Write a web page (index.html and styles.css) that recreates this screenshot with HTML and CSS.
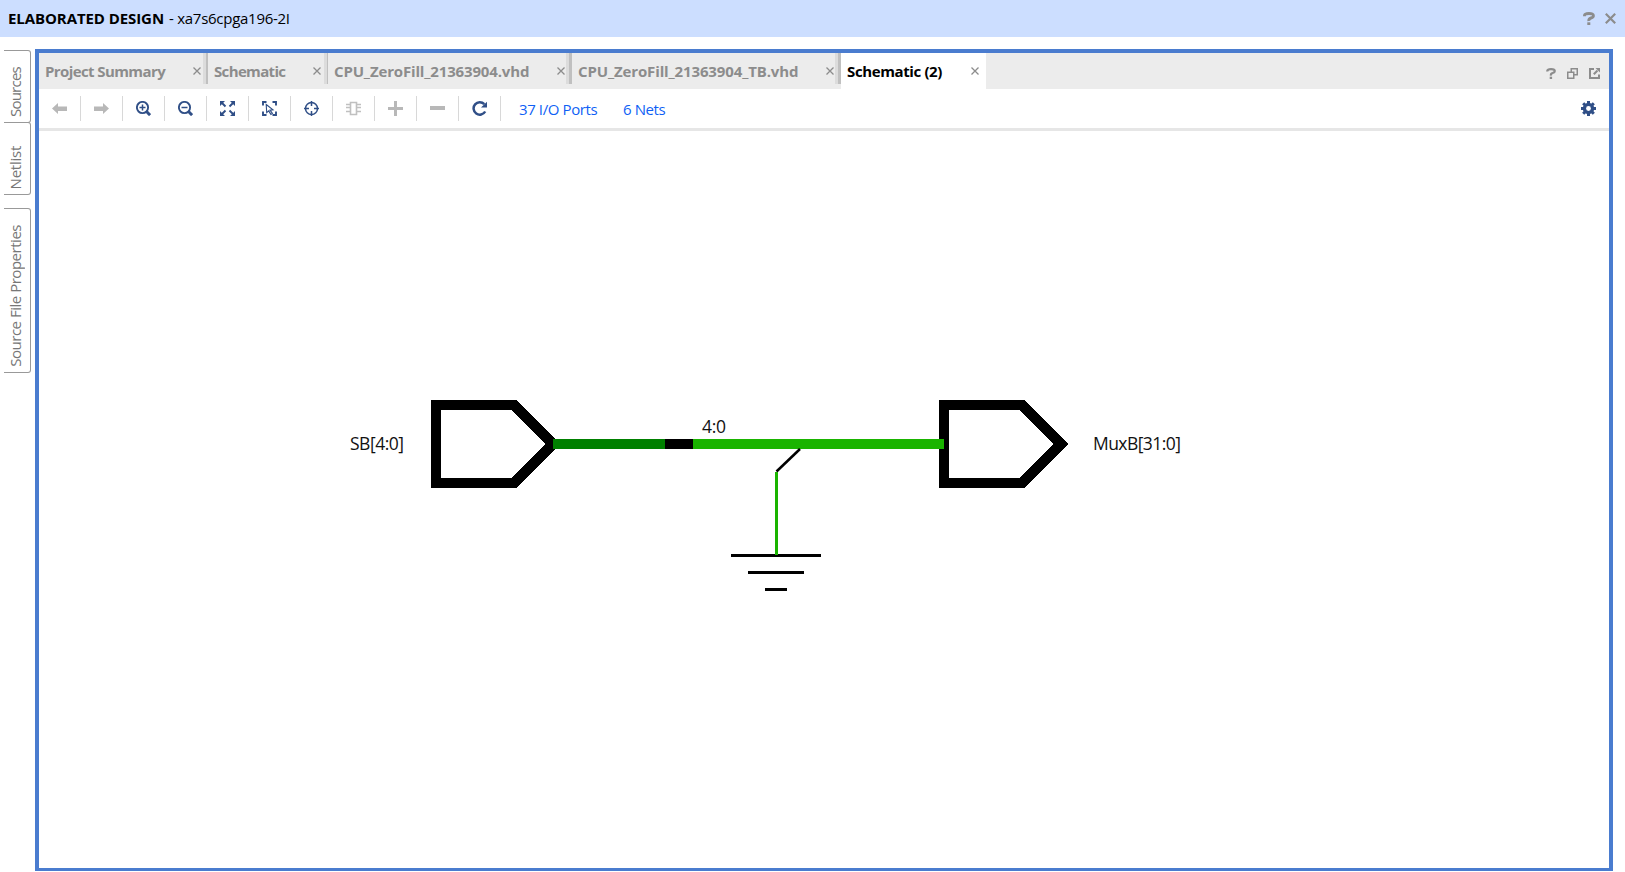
FILE: index.html
```html
<!DOCTYPE html>
<html lang="en">
<head>
<meta charset="utf-8">
<title>Elaborated Design</title>
<link rel="stylesheet" href="styles.css">
</head>
<body>
<header class="titlebar">
  <h1 class="title"><span class="title-name">ELABORATED DESIGN</span><span class="title-part">- xa7s6cpga196-2I</span></h1>
  <div class="title-actions">
    <svg width="12" height="13" viewBox="0 0 12 13"><path class="g-line thick" d="M1.5 4.2V3.6Q1.5 1.5 6 1.5T10.400 3.700Q10.400 5.300 8 6T5.800 9"/><rect class="g-fill" x="4.300" y="10.300" width="3" height="2.700"/></svg>
    <svg width="11" height="11" viewBox="0 0 11 11"><path class="g-line mid" d="M.8.8l9.400 9.400M10.200.8L.8 10.200"/></svg>
  </div>
</header>
<main class="workspace">
  <nav class="side">
    <div class="side-tab sources"><span>Sources</span></div>
    <div class="side-tab netlist"><span>Netlist</span></div>
    <div class="side-tab props"><span>Source File Properties</span></div>
  </nav>
  <section class="panel">
    <div class="tabs">
      <div class="tab t1"><span class="label">Project Summary</span><svg class="close" width="8" height="8"><path d="M.5.5l7 7M7.500.5l-7 7"/></svg></div>
      <div class="tab t2"><span class="label">Schematic</span><svg class="close" width="8" height="8"><path d="M.5.5l7 7M7.500.5l-7 7"/></svg></div>
      <div class="tab t3"><span class="label">CPU_ZeroFill_21363904.vhd</span><svg class="close" width="8" height="8"><path d="M.5.5l7 7M7.500.5l-7 7"/></svg></div>
      <div class="tab t4"><span class="label">CPU_ZeroFill_21363904_TB.vhd</span><svg class="close" width="8" height="8"><path d="M.5.5l7 7M7.500.5l-7 7"/></svg></div>
      <div class="tab t5 active"><span class="label">Schematic (2)</span><svg class="close" width="8" height="8"><path d="M.5.5l7 7M7.500.5l-7 7"/></svg></div>
      <div class="panel-actions">
        <svg width="10" height="11" viewBox="0 0 10 11"><path class="g-line mid2" d="M1.200 3.400Q1.200 1.100 5 1.100T8.800 3.100Q8.800 4.500 6.700 5T4.900 7.700"/><rect class="g-fill" x="3.700" y="8.700" width="2.400" height="2.300"/></svg>
        <svg width="11" height="11" viewBox="0 0 11 11"><path class="g-line" d="M.75 4.250h6v6h-6zM4.250 4V.75h6v6H7"/></svg>
        <svg width="11" height="11" viewBox="0 0 11 11"><path class="g-line w2" d="M5 1H1v9h9V6.500"/><path class="g-line w2" d="M4.800 6.200L8.500 2.500"/><path class="g-fill" d="M6.500 0H11v4.500z"/></svg>
      </div>
    </div>
    <div class="toolbar">
      <div class="tool"><svg width="15" height="15" viewBox="0 0 15 15"><path class="d-fill" d="M0 7.500L6 2v3.500h9v4.500H6V13z"/></svg></div>
      <div class="tool"><svg width="15" height="15" viewBox="0 0 15 15"><path class="d-fill" d="M15 7.500L9 2v3.500H0v4.500h9V13z"/></svg></div>
      <div class="tool"><svg width="15" height="15" viewBox="0 0 15 15"><circle class="b-line" cx="6.500" cy="6.500" r="5.600"/><path class="b-line thin" d="M6.500 3.500v6M3.500 6.500h6"/><path class="b-line handle" d="M10.500 10.500l3.600 3.600"/></svg></div>
      <div class="tool"><svg width="15" height="15" viewBox="0 0 15 15"><circle class="b-line" cx="6.500" cy="6.500" r="5.600"/><path class="b-line thin" d="M3.500 6.500h6"/><path class="b-line handle" d="M10.500 10.500l3.600 3.600"/></svg></div>
      <div class="tool"><svg width="15" height="15" viewBox="0 0 15 15"><path class="b-fill" d="M0 0h5L0 5zM10 0h5v5zM0 10l5 5H0zM15 10v5h-5z"/><path class="b-line" d="M1 1l4.500 4.500M14 1L9.500 5.500M1 14l4.500-4.500M14 14L9.500 9.500"/></svg></div>
      <div class="tool"><svg width="15" height="15" viewBox="0 0 15 15"><path class="b-line" d="M1 4.500V1h3.500M10.500 1H14v3.500M14 10.500V14h-3.500M4.500 14H1v-3.500"/><path class="b-line fine" d="M4.200 3.500l6.800 5.400-3 .3 2.400 3.200-1.500 1-2.200-3.500-2 1.700z"/></svg></div>
      <div class="tool"><svg width="15" height="15" viewBox="0 0 15 15"><circle class="b-line thin" cx="7.500" cy="7.500" r="6"/><path class="b-line thin" d="M7.500 0v5M7.500 10v5M0 7.500h5M10 7.500h5"/></svg></div>
      <div class="tool"><svg width="15" height="15" viewBox="0 0 15 15"><path class="p-line" d="M4.500 1.500h6v12h-6zM0 3.500h4.500M0 6.500h4.500M0 10.500h4.500M10.500 3.500H15M10.500 6.500H15M10.500 10.500H15"/></svg></div>
      <div class="tool"><svg width="15" height="15" viewBox="0 0 15 15"><path class="d-fill" d="M6 0h3v6h6v3H9v6H6V9H0V6h6z"/></svg></div>
      <div class="tool"><svg width="15" height="15" viewBox="0 0 15 15"><path class="d-fill" d="M0 5h15v4H0z"/></svg></div>
      <div class="tool"><svg width="15" height="15" viewBox="0 0 15 15"><path class="b-line heavy" d="M12.300 3.200A6.200 6.200 0 1 0 13.200 10.500"/><path class="b-fill" d="M15 .7V6.500H9z"/></svg></div>
      <a class="link ports">37 I/O Ports</a>
      <a class="link nets">6 Nets</a>
      <svg class="gear" width="15" height="15" viewBox="-7.500 -7.500 15 15"><g class="b-fill"><rect x="-1.500" y="-7.500" width="3" height="15"/><rect x="-7.500" y="-1.500" width="15" height="3"/><rect x="-1.500" y="-7.500" width="3" height="15" transform="rotate(45)"/><rect x="-1.500" y="-7.500" width="3" height="15" transform="rotate(-45)"/><circle r="5.700"/></g><circle r="2.400" fill="#fff"/></svg>
    </div>
    <svg class="canvas" width="1570" height="737" viewBox="39 131 1570 737">
      <g class="port"><path d="M436 405H514L553 444 514 483H436z"/><path d="M944 405H1022L1061 444 1022 483H944z"/></g>
      <rect x="553" y="439" width="112" height="10" fill="#008000"/>
      <rect x="665" y="439" width="28" height="10"/>
      <rect x="693" y="439" width="251" height="10" fill="#1ab400"/>
      <path class="tap" d="M800 449L776.500 471.500"/>
      <path d="M731 554h90v3h-90zM748 571h56v3h-56zM765 588h22v3h-22z"/>
      <rect x="775" y="472" width="3" height="83" fill="#1ab400"/>
      <g class="net-label">
        <text x="350" y="450" textLength="54">SB[4:0]</text>
        <text x="702" y="433" textLength="24">4:0</text>
        <text x="1093" y="450" textLength="88">MuxB[31:0]</text>
      </g>
    </svg>
  </section>
</main>
</body>
</html>
```
FILE: styles.css
```css
* { box-sizing: border-box; }
body {
  margin: 0;
  height: 872px;
  overflow: hidden;
  background: #fff;
  color: #000;
  font: 15px/20px "Open Sans", "Noto Sans", sans-serif;
}
svg { display: block; flex: none; }
.titlebar {
  display: flex;
  justify-content: space-between;
  align-items: center;
  height: 37px;
  padding: 0 9px 0 8px;
  background: #ccdeff;
}
.title { display: flex; margin: 0; padding-bottom: 2px; font-size: 15px; font-weight: 400; white-space: nowrap; }
.title-name { width: 161px; font-weight: 700; letter-spacing: -0.08px; }
.title-part { letter-spacing: -0.27px; }
.title-actions { display: flex; align-items: center; gap: 10px; }

.workspace { display: flex; height: 834px; }
.side { width: 35px; padding: 13px 0 0 4px; }
.side-tab {
  display: flex;
  align-items: flex-end;
  width: 27px;
  padding-left: 1px;
  border: 1px solid #999;
  border-left: 0;
  border-radius: 0 3px 3px 0;
  color: #777;
}
.side-tab span { writing-mode: vertical-rl; transform: rotate(180deg); white-space: nowrap; padding-top: 5px; }
.sources { height: 73px; letter-spacing: -0.75px; }
.netlist { height: 73px; margin-top: -1px; letter-spacing: -0.25px; }
.props { height: 165px; margin-top: 13px; letter-spacing: -0.48px; }

.panel {
  width: 1578px;
  height: 822px;
  margin-top: 12px;
  border: 4px solid #4a7ccf;
  border-bottom-width: 3px;
}
.tabs { display: flex; height: 36px; background: #ececec; }
.tab {
  display: flex;
  align-items: center;
  justify-content: space-between;
  height: 31px;
  padding: 5px 4px 0 6px;
  border-right: 2px solid #c0c0c0;
  box-shadow: inset -3px 0 #dcdcdc;
  color: #8c8c8c;
  font-weight: 700;
  white-space: nowrap;
}
.label { height: 20px; }
.t1 { width: 169px; padding-right: 5px; letter-spacing: -0.6px; }
.t2 { width: 120px; padding-right: 6px; border-right-width: 1px; letter-spacing: -0.65px; }
.t3 { width: 244px; padding-right: 4px; border-right-width: 3px; letter-spacing: -0.15px; }
.t4 { width: 269px; border-right-width: 3px; letter-spacing: -0.13px; }
.t5 { width: 145px; padding-right: 7px; letter-spacing: -0.38px; }
.tab.active { height: 36px; padding-bottom: 5px; border: 0; box-shadow: none; background: #fff; color: #000; }
.close path { fill: none; stroke: #8c8c8c; stroke-width: 1.3; }
.panel-actions { display: flex; gap: 11px; margin: 15px 9px 0 auto; }

.toolbar {
  display: flex;
  align-items: center;
  height: 42px;
  padding-bottom: 1px;
  border-bottom: 3px solid #e6e6e6;
}
.tool {
  display: flex;
  align-items: center;
  justify-content: center;
  width: 42px;
  height: 25px;
  border-right: 1px solid #d8d8d8;
}
.link { color: #0f5ff5; white-space: nowrap; padding-top: 2px; letter-spacing: -0.4px; }
.ports { width: 104px; margin-left: 18px; }
.gear { margin: 0 13px 0 auto; }

.g-line { fill: none; stroke: #8c8c8c; stroke-width: 1.5; }
.g-fill { fill: #8c8c8c; }
.thick { stroke-width: 2.9; }
.mid { stroke-width: 2.2; }
.mid2 { stroke-width: 2.2; }
.w2 { stroke-width: 2; }
.d-fill { fill: #b8b8b8; }
.b-fill { fill: #304f87; }
.b-line { fill: none; stroke: #304f87; stroke-width: 1.9; }
.thin { stroke-width: 1.5; }
.fine { stroke-width: 1.1; }
.handle { stroke-width: 3; }
.heavy { stroke-width: 2.5; }
.p-line { fill: none; stroke: #c0c0c0; stroke-width: 1.6; }

.port path { fill: none; stroke: #000; stroke-width: 10; stroke-miterlimit: 8; shape-rendering: crispEdges; }
.tap { stroke: #000; stroke-width: 2.5; }
.net-label { font-size: 17.5px; fill: #111; }
```
